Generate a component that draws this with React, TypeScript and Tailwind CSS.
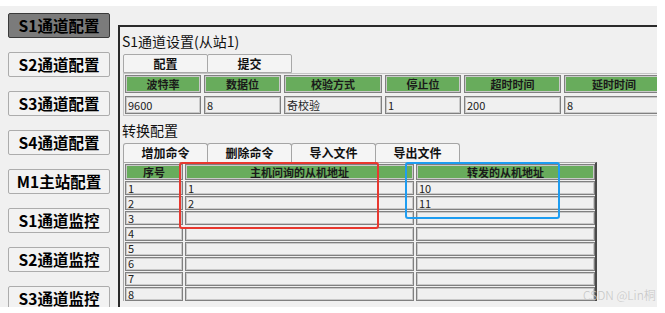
import React from "react";

const navItems = [
  "S1通道配置",
  "S2通道配置",
  "S3通道配置",
  "S4通道配置",
  "M1主站配置",
  "S1通道监控",
  "S2通道监控",
  "S3通道监控",
];

const serialCols = [
  { label: "波特率", value: "9600" },
  { label: "数据位", value: "8" },
  { label: "校验方式", value: "奇校验" },
  { label: "停止位", value: "1" },
  { label: "超时时间", value: "200" },
  { label: "延时时间", value: "8" },
];

const mapRows = [
  ["1", "1", "10"],
  ["2", "2", "11"],
  ["3", "", ""],
  ["4", "", ""],
  ["5", "", ""],
  ["6", "", ""],
  ["7", "", ""],
  ["8", "", ""],
];

const cell = "border border-[#808080] shadow-[inset_0_0_0_1px_#c9c9c9]";

function HeadCell({ children }: { children: React.ReactNode }) {
  return (
    <div className={`${cell} flex items-center justify-center bg-[#68ac5c] text-[11px] font-bold leading-none text-[#1a1a1a]`}>
      {children}
    </div>
  );
}

function DataCell({ children }: { children?: React.ReactNode }) {
  return (
    <div className={`${cell} flex items-center bg-[#f0f0f0] pl-[2px] text-[11px] leading-none text-[#222]`}>
      {children}
    </div>
  );
}

export default function App() {
  return (
    <div className="relative h-[313px] w-[665px] overflow-hidden bg-white font-['Noto_Sans_CJK_SC',sans-serif] text-[#111]">
      <div className="mt-[6px] flex h-[301px] w-[657px] overflow-hidden bg-[#f0f0f0]">
        {/* side menu */}
        <nav className="flex w-[118px] shrink-0 flex-col gap-[14px] pl-[8px] pt-[7px]">
          {navItems.map((item, i) => (
            <button
              key={item}
              className={
                i === 0
                  ? "flex h-[25px] w-[102px] shrink-0 items-center justify-center rounded-[2px] border border-[#3a3a3a] bg-[#7b7b7b] text-[15.5px] font-bold leading-none text-black"
                  : "flex h-[25px] w-[102px] shrink-0 items-center justify-center rounded-[2px] border border-[#acacac] bg-[#f2f2f2] text-[15.5px] font-bold leading-none text-black"
              }
            >
              {item}
            </button>
          ))}
        </nav>

        {/* channel settings panel */}
        <section className="mt-[19px] flex min-w-0 flex-1 flex-col overflow-hidden border-l-2 border-t-2 border-[#2a2a2a] pl-[3px]">
          <div className="-ml-px flex h-[27px] shrink-0 items-center text-[14px] leading-none">S1通道设置(从站1)</div>

          <div className="flex h-[19px] shrink-0">
            <button className="flex w-[85px] items-center justify-center rounded-t-[2px] border border-[#a8a8a8] bg-[#f4f4f4] text-[12px] font-bold leading-none">
              配置
            </button>
            <button className="-ml-px flex w-[85px] items-center justify-center rounded-t-[2px] border border-[#a8a8a8] bg-[#f4f4f4] text-[12px] font-bold leading-none">
              提交
            </button>
          </div>

          <div className="w-[560px] shrink-0 border border-[#c4c4c4] p-px">
            <div className="grid grid-cols-[76px_77px_98px_76px_97px_100px] grid-rows-[18px_18px] gap-x-[3px] gap-y-[3px]">
              {serialCols.map((c) => (
                <HeadCell key={c.label}>{c.label}</HeadCell>
              ))}
              {serialCols.map((c) => (
                <DataCell key={c.label}>{c.value}</DataCell>
              ))}
            </div>
          </div>

          <div className="-ml-px flex h-[27px] shrink-0 items-center text-[14px] leading-none">转换配置</div>

          <div className="flex h-[19px] shrink-0">
            {["增加命令", "删除命令", "导入文件", "导出文件"].map((t, i) => (
              <button
                key={t}
                className={`${i > 0 ? "-ml-px " : ""}flex w-[85px] items-center justify-center rounded-t-[3px] border border-b-0 border-[#a5a5a5] bg-[#f5f5f5] text-[12px] font-bold leading-none`}
              >
                {t}
              </button>
            ))}
          </div>

          <div className="w-[474px] shrink-0 border-l border-t border-[#a8a8a8] border-r-2 border-r-[#4a4a4a] pl-px pt-px">
            <div className="grid grid-cols-[58px_229px_179px] grid-rows-[16px] auto-rows-[14px] gap-x-[2px] gap-y-[1.15px]">
              <HeadCell>序号</HeadCell>
              <HeadCell>主机问询的从机地址</HeadCell>
              <HeadCell>转发的从机地址</HeadCell>
              {mapRows.map((r) =>
                r.map((v, j) => <DataCell key={`${r[0]}-${j}`}>{v}</DataCell>)
              )}
            </div>
          </div>
        </section>
      </div>

      {/* annotations */}
      <div className="absolute left-[179px] top-[162px] h-[67px] w-[200px] rounded-[3px] border-2 border-[#e8382f]" />
      <div className="absolute left-[405px] top-[162px] h-[57px] w-[155px] rounded-[3px] border-2 border-[#1e9df1]" />
      <div className="absolute left-[583px] top-[289px] text-[12px] font-light leading-none text-[#c6c6c6]">CSDN @Lin桐</div>
    </div>
  );
}
